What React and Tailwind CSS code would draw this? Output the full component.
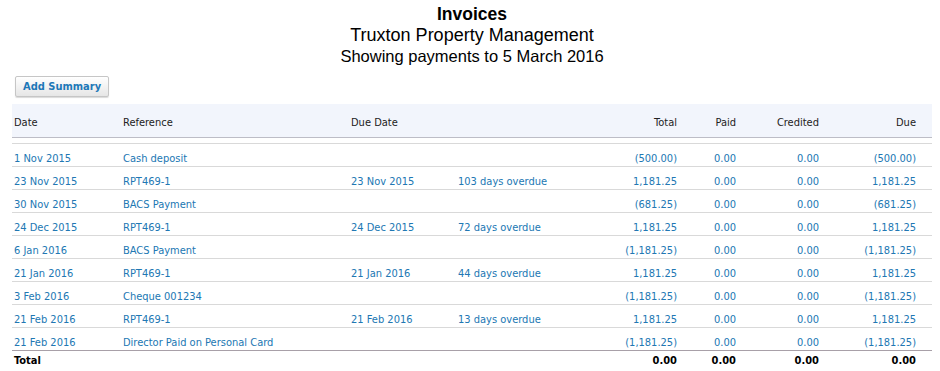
import React from "react";

const rows = [
  { date: "1 Nov 2015", ref: "Cash deposit", due: "", overdue: "", total: "(500.00)", paid: "0.00", credited: "0.00", owed: "(500.00)" },
  { date: "23 Nov 2015", ref: "RPT469-1", due: "23 Nov 2015", overdue: "103 days overdue", total: "1,181.25", paid: "0.00", credited: "0.00", owed: "1,181.25" },
  { date: "30 Nov 2015", ref: "BACS Payment", due: "", overdue: "", total: "(681.25)", paid: "0.00", credited: "0.00", owed: "(681.25)" },
  { date: "24 Dec 2015", ref: "RPT469-1", due: "24 Dec 2015", overdue: "72 days overdue", total: "1,181.25", paid: "0.00", credited: "0.00", owed: "1,181.25" },
  { date: "6 Jan 2016", ref: "BACS Payment", due: "", overdue: "", total: "(1,181.25)", paid: "0.00", credited: "0.00", owed: "(1,181.25)" },
  { date: "21 Jan 2016", ref: "RPT469-1", due: "21 Jan 2016", overdue: "44 days overdue", total: "1,181.25", paid: "0.00", credited: "0.00", owed: "1,181.25" },
  { date: "3 Feb 2016", ref: "Cheque 001234", due: "", overdue: "", total: "(1,181.25)", paid: "0.00", credited: "0.00", owed: "(1,181.25)" },
  { date: "21 Feb 2016", ref: "RPT469-1", due: "21 Feb 2016", overdue: "13 days overdue", total: "1,181.25", paid: "0.00", credited: "0.00", owed: "1,181.25" },
  { date: "21 Feb 2016", ref: "Director Paid on Personal Card", due: "", overdue: "", total: "(1,181.25)", paid: "0.00", credited: "0.00", owed: "(1,181.25)" },
];

// shared column template for header, body and total rows
const cols = "grid grid-cols-[109px_228px_107px_1fr_80px_59px_83px_113px]";

function App() {
  return (
    <div className="w-[940px] h-[371px] bg-white overflow-hidden font-['DejaVu_Sans_Condensed','DejaVu_Sans',sans-serif] text-[11px]">
      {/* Title block */}
      <div className="pt-[4px] pl-[4px] text-center text-black font-['Liberation_Sans',Arial,sans-serif]">
        <div className="text-[17.5px] font-bold leading-[21px]">Invoices</div>
        <div className="text-[18px] leading-[21px]">Truxton Property Management</div>
        <div className="text-[16.5px] leading-[21px]">Showing payments to 5 March 2016</div>
      </div>

      <div className="pl-[15px] pt-[9px]">
        <button className="h-[21px] px-[7px] border border-[#c6c6c6] rounded-[2px] bg-gradient-to-b from-white to-[#e6e6e6] shadow-[0_1px_1px_rgba(0,0,0,0.15)] text-[#1d78b8] font-bold text-[11px] leading-[19px]">
          Add Summary
        </button>
      </div>

      <div className="mx-[12px] mt-[7px] w-[920px]">
        {/* Header */}
        <div className={`${cols} h-[34px] items-center pt-[5px] bg-[#f2f5fc] border-b border-[#bdbdc6] text-[#222]`}>
          <div className="pl-[2px]">Date</div>
          <div className="pl-[2px]">Reference</div>
          <div className="pl-[2px]">Due Date</div>
          <div></div>
          <div className="text-right">Total</div>
          <div className="text-right">Paid</div>
          <div className="text-right">Credited</div>
          <div className="text-right pr-[16px]">Due</div>
        </div>

        {/* Body */}
        <div className="mt-[5px]">
          {rows.map((r, i) => (
            <div
              key={i}
              className={`${cols} h-[23px] items-center pt-[7px] border-t border-[#d9d9d9] text-[#2177b3]`}
            >
              <div className="pl-[2px]">{r.date}</div>
              <div className="pl-[2px]">{r.ref}</div>
              <div className="pl-[2px]">{r.due}</div>
              <div className="pl-[2px]">{r.overdue}</div>
              <div className="text-right">{r.total}</div>
              <div className="text-right">{r.paid}</div>
              <div className="text-right">{r.credited}</div>
              <div className="text-right pr-[16px]">{r.owed}</div>
            </div>
          ))}
        </div>

        {/* Total */}
        <div className={`${cols} h-[20px] items-center pt-[1px] border-t border-[#a8a0a8] font-bold text-black`}>
          <div className="pl-[2px]">Total</div>
          <div></div>
          <div></div>
          <div></div>
          <div className="text-right">0.00</div>
          <div className="text-right">0.00</div>
          <div className="text-right">0.00</div>
          <div className="text-right pr-[16px]">0.00</div>
        </div>
      </div>
    </div>
  );
}

export default App;
